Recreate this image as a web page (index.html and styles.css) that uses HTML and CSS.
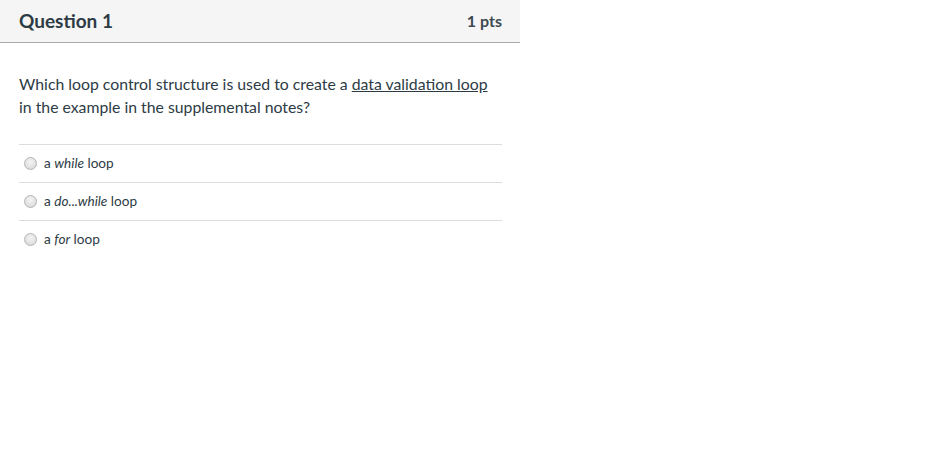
FILE: index.html
```html
<!DOCTYPE html>
<html>
<head>
<meta charset="utf-8">
<link rel="stylesheet" href="styles.css">
</head>
<body>
<div class="question">
  <div class="header">
    <span class="title">Question 1</span>
    <span class="pts">1 pts</span>
  </div>
  <div class="content">
    <p class="text">Which loop control structure is used to create a <u>data validation loop</u> in the example in the supplemental notes?</p>
    <div class="answers">
      <label class="answer"><span class="radio"></span><span>a <i>while</i> loop</span></label>
      <label class="answer"><span class="radio"></span><span>a <i>do...while</i> loop</span></label>
      <label class="answer"><span class="radio"></span><span>a <i>for</i> loop</span></label>
    </div>
  </div>
</div>
</body>
</html>
```
FILE: styles.css
```css
* { box-sizing: border-box; }
body {
  margin: 0;
  background: #fff;
  font-family: Lato, "Open Sans", sans-serif;
  color: #2d3b45;
}
.question { width: 520px; }
.header {
  height: 43px;
  background: #f5f5f5;
  border-bottom: 1px solid #aaaaaa;
  display: flex;
  align-items: center;
  justify-content: space-between;
  padding: 0 18px 2px 19px;
}
.title { font-size: 19px; font-weight: 700; }
.pts { font-size: 16px; font-weight: 700; color: #3d4a52; }
.content { padding: 29px 18px 0 19px; }
.text {
  margin: 0;
  font-size: 15.8px;
  line-height: 23px;
  width: 480px;
}
.answers { margin-top: 26px; border-top: 1px solid #dddddd; }
.answer {
  display: flex;
  align-items: center;
  height: 38px;
  border-bottom: 1px solid #dddddd;
  font-size: 13.6px;
  padding: 0 0 1px 5px;
}
.answer:last-child { border-bottom-color: transparent; }
.radio {
  width: 13px; height: 13px;
  border-radius: 50%;
  border: 1px solid #b4b4b4;
  background: radial-gradient(circle at 50% 35%, #f4f4f4, #d6d6d6);
  margin-right: 7px;
  flex: none;
}
```
